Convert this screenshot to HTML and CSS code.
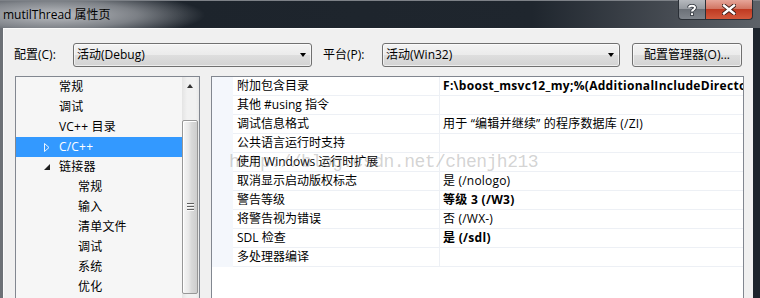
FILE: index.html
```html
<!DOCTYPE html>
<html lang="zh-CN">
<head>
    <meta charset="UTF-8">
    <title>mutilThread 属性页</title>
    <link rel="stylesheet" href="styles.css">
</head>
<body>
    <div class="window">
        <div class="titlebar">
            <span class="title">mutilThread 属性页</span>
            <div class="caption-buttons">
                <div class="cap-btn help">
                    <svg width="10" height="12" viewBox="0 0 10 12">
                        <path d="M2 3.5 C2 1.2 8 1.2 8 3.8 C8 5.6 5 5.6 5 7.6" fill="none" stroke="#2b3038" stroke-width="3.6"/>
                        <path d="M2 3.5 C2 1.2 8 1.2 8 3.8 C8 5.6 5 5.6 5 7.6" fill="none" stroke="#fff" stroke-width="2"/>
                        <rect x="3.6" y="8.8" width="2.8" height="2.8" fill="#fff" stroke="#2b3038" stroke-width="0.8"/>
                    </svg>
                </div>
                <div class="cap-btn close">
                    <svg width="14" height="11" viewBox="0 0 14 11">
                        <path d="M2 1.5 L12 9.5 M12 1.5 L2 9.5" stroke="#3a1a14" stroke-width="4.2" stroke-linecap="square"/>
                        <path d="M2 1.5 L12 9.5 M12 1.5 L2 9.5" stroke="#fff" stroke-width="2.4" stroke-linecap="square"/>
                    </svg>
                </div>
            </div>
        </div>
        <div class="frame">
            <div class="client">
                <div class="config-row">
                    <span class="lbl">配置(C):</span>
                    <div class="combo combo-config">
                        <span>活动(Debug)</span>
                        <i class="arrow"></i>
                    </div>
                    <span class="lbl lbl-platform">平台(P):</span>
                    <div class="combo combo-platform">
                        <span>活动(Win32)</span>
                        <i class="arrow"></i>
                    </div>
                    <button class="btn">配置管理器(O)...</button>
                </div>
                <div class="panes">
                    <div class="tree">
                        <ul class="tree-list">
                            <li class="lvl1"><span class="twisty"></span>常规</li>
                            <li class="lvl1"><span class="twisty"></span>调试</li>
                            <li class="lvl1"><span class="twisty"></span>VC++ 目录</li>
                            <li class="lvl1 selected">
                                <span class="twisty">
                                    <svg width="6" height="9" viewBox="0 0 6 9"><path d="M0.5 0.5 L5 4.5 L0.5 8.5 Z" fill="none" stroke="#eaf4ff" stroke-width="1"/></svg>
                                </span>C/C++
                            </li>
                            <li class="lvl1">
                                <span class="twisty">
                                    <svg width="6" height="6" viewBox="0 0 6 6"><path d="M6 0 L6 6 L0 6 Z" fill="#1e1e1e"/></svg>
                                </span>链接器
                            </li>
                            <li class="lvl2">常规</li>
                            <li class="lvl2">输入</li>
                            <li class="lvl2">清单文件</li>
                            <li class="lvl2">调试</li>
                            <li class="lvl2">系统</li>
                            <li class="lvl2">优化</li>
                        </ul>
                        <div class="vscroll">
                            <div class="scroll-up"><i class="up-arrow"></i></div>
                            <div class="scroll-track"></div>
                            <div class="scroll-thumb"><i class="grip"></i></div>
                        </div>
                    </div>
                    <div class="grid">
                        <div class="grid-body">
                            <div class="gutter"></div>
                            <div class="props">
                                <div class="prop-row"><div class="prop-name">附加包含目录</div><div class="prop-value bold">F:\boost_msvc12_my;%(AdditionalIncludeDirectories)</div></div>
                                <div class="prop-row"><div class="prop-name">其他 #using 指令</div><div class="prop-value"></div></div>
                                <div class="prop-row"><div class="prop-name">调试信息格式</div><div class="prop-value">用于 “编辑并继续” 的程序数据库 (/ZI)</div></div>
                                <div class="prop-row"><div class="prop-name">公共语言运行时支持</div><div class="prop-value"></div></div>
                                <div class="prop-row"><div class="prop-name">使用 Windows 运行时扩展</div><div class="prop-value"></div></div>
                                <div class="prop-row"><div class="prop-name">取消显示启动版权标志</div><div class="prop-value">是 (/nologo)</div></div>
                                <div class="prop-row"><div class="prop-name">警告等级</div><div class="prop-value bold">等级 3 (/W3)</div></div>
                                <div class="prop-row"><div class="prop-name">将警告视为错误</div><div class="prop-value">否 (/WX-)</div></div>
                                <div class="prop-row"><div class="prop-name">SDL 检查</div><div class="prop-value bold">是 (/sdl)</div></div>
                                <div class="prop-row"><div class="prop-name">多处理器编译</div><div class="prop-value"></div></div>
                            </div>
                        </div>
                        <div class="watermark">http://blog.csdn.net/chenjh213</div>
                    </div>
                </div>
            </div>
        </div>
    </div>
</body>
</html>
```

FILE: styles.css
```css
* {
    margin: 0;
    padding: 0;
    box-sizing: border-box;
}
body {
    width: 760px;
    height: 298px;
    overflow: hidden;
    background: #1f262e;
    font-family: "Open Sans", "Noto Sans CJK SC", sans-serif;
    font-size: 12px;
    color: #000;
}
.window {
    height: 298px;
    display: flex;
    flex-direction: column;
}
.titlebar {
    flex-shrink: 0;
    height: 28px;
    display: flex;
    align-items: flex-start;
    border-top: 1px solid #7d8187;
    background:
        radial-gradient(ellipse 150px 24px at 55px 14px, rgba(196, 198, 202, 0.95) 0, rgba(160, 163, 168, 0.7) 55%, rgba(40, 46, 54, 0) 100%),
        linear-gradient(90deg, #3a4048 0, #1d242c 25%, #1f262e 70%, #4a4f56 90%, #5d6268 100%);
}
.title {
    padding: 5px 0 0 3px;
    line-height: 18px;
    font-size: 12px;
    color: #000;
}
.caption-buttons {
    margin-left: auto;
    margin-right: 7px;
    margin-top: -1px;
    display: flex;
    height: 20px;
}
.cap-btn {
    height: 20px;
    border: 1px solid #2a2f36;
    border-top: none;
    display: flex;
    align-items: center;
    justify-content: center;
}
.help {
    width: 28px;
    border-radius: 0 0 0 4px;
    background: linear-gradient(#b6b9be 0, #979ba1 45%, #6c7178 50%, #80858c 100%);
}
.close {
    width: 47px;
    border-left: none;
    border-radius: 0 0 4px 0;
    background: linear-gradient(#e6a599 0, #d27664 45%, #bf3a22 50%, #d2593c 100%);
}
.frame {
    flex: 1;
    min-height: 0;
    overflow: hidden;
    display: flex;
    border-left: 3px solid #6c7076;
    padding-right: 7px;
    background: linear-gradient(90deg, #2b323a, #1d242c);
}
.client {
    flex: 1;
    background: #f0f0f0;
    box-shadow: inset 1px 1px 0 #fbfbfb;
}
.config-row {
    display: flex;
    align-items: center;
    height: 24px;
    margin: 15px 0 0 11px;
}
.lbl {
    width: 59px;
    line-height: 24px;
}
.lbl-platform {
    margin-left: 11px;
}
.combo {
    height: 24px;
    border: 1px solid #707070;
    border-radius: 3px;
    background: linear-gradient(#f3f3f3 0, #ebebeb 50%, #dedede 50%, #d3d3d3 100%);
    box-shadow: inset 0 0 0 1px rgba(255, 255, 255, 0.6);
    display: flex;
    align-items: center;
    padding-left: 3px;
    line-height: 20px;
}
.combo-config {
    width: 239px;
}
.combo-platform {
    width: 238px;
}
.arrow {
    margin-left: auto;
    margin-right: 5px;
    width: 0;
    height: 0;
    border-left: 3.5px solid transparent;
    border-right: 3.5px solid transparent;
    border-top: 4px solid #000;
}
.btn {
    width: 110px;
    height: 24px;
    margin-left: 12px;
    border: 1px solid #707070;
    border-radius: 3px;
    background: linear-gradient(#f3f3f3 0, #ebebeb 50%, #dedede 50%, #d3d3d3 100%);
    box-shadow: inset 0 0 0 1px rgba(255, 255, 255, 0.6);
    font-family: inherit;
    font-size: 12px;
    color: #000;
    line-height: 20px;
}
.panes {
    display: flex;
    margin: 9px 0 0 12px;
    height: 240px;
}
.tree {
    flex-shrink: 0;
    width: 185px;
    height: 240px;
    border: 1px solid #828790;
    background: #f6f6f6;
    display: flex;
}
.tree-list {
    list-style: none;
    width: 166px;
}
.tree-list li {
    height: 20px;
    line-height: 20px;
    white-space: nowrap;
    display: flex;
    align-items: center;
    letter-spacing: 0.2px;
}
.tree-list .lvl1 {
    padding-left: 28px;
}
.tree-list .lvl2 {
    padding-left: 62px;
}
.twisty {
    width: 15px;
    display: flex;
    align-items: center;
}
.tree-list .selected {
    background: #3399ff;
    color: #fff;
}
.vscroll {
    width: 17px;
    padding-right: 1px;
    display: flex;
    flex-direction: column;
    background: linear-gradient(90deg, #e4e4e4, #f1f1f1 30%, #f1f1f1 80%, #e8e8e8);
}
.scroll-up {
    height: 17px;
    display: flex;
    align-items: center;
    justify-content: center;
}
.up-arrow {
    width: 0;
    height: 0;
    border-left: 3.5px solid transparent;
    border-right: 3.5px solid transparent;
    border-bottom: 4px solid #333;
}
.scroll-track {
    height: 26px;
}
.scroll-thumb {
    height: 174px;
    border: 1px solid #979797;
    border-radius: 2px;
    background: linear-gradient(90deg, #f6f6f6 0, #e9e9e9 40%, #d9d9d9 60%, #cdcdcd 100%);
    box-shadow: inset 1px 1px 0 #fff;
    display: flex;
    align-items: center;
    justify-content: center;
}
.grip {
    width: 7px;
    height: 8px;
    background: repeating-linear-gradient(#5f5f5f 0 1px, #fafafa 1px 2px, transparent 2px 3px);
}
.grid {
    flex-shrink: 0;
    width: 533px;
    height: 240px;
    margin-left: 11px;
    border: 1px solid #828790;
    background: #fff;
    position: relative;
    overflow: hidden;
}
.grid-body {
    display: flex;
}
.gutter {
    flex-shrink: 0;
    width: 21px;
    height: 190px;
    background: #f4f7fc;
}
.props {
    flex: 1;
    min-width: 0;
}
.prop-row {
    display: flex;
    height: 19px;
    border-bottom: 1px solid #edf0f5;
}
.prop-name {
    flex-shrink: 0;
    width: 207px;
    padding-left: 4px;
    line-height: 18px;
    border-right: 1px solid #edf0f5;
    white-space: nowrap;
}
.prop-value {
    flex: 1;
    min-width: 0;
    padding-left: 3px;
    line-height: 18px;
    white-space: nowrap;
    overflow: hidden;
    letter-spacing: 0.2px;
}
.bold {
    font-weight: bold;
    letter-spacing: 0.3px;
}
.watermark {
    position: absolute;
    left: 17px;
    top: 75px;
    font-family: "Liberation Mono", monospace;
    font-size: 18px;
    letter-spacing: -0.5px;
    color: rgba(150, 150, 150, 0.42);
    white-space: nowrap;
    pointer-events: none;
}
```
